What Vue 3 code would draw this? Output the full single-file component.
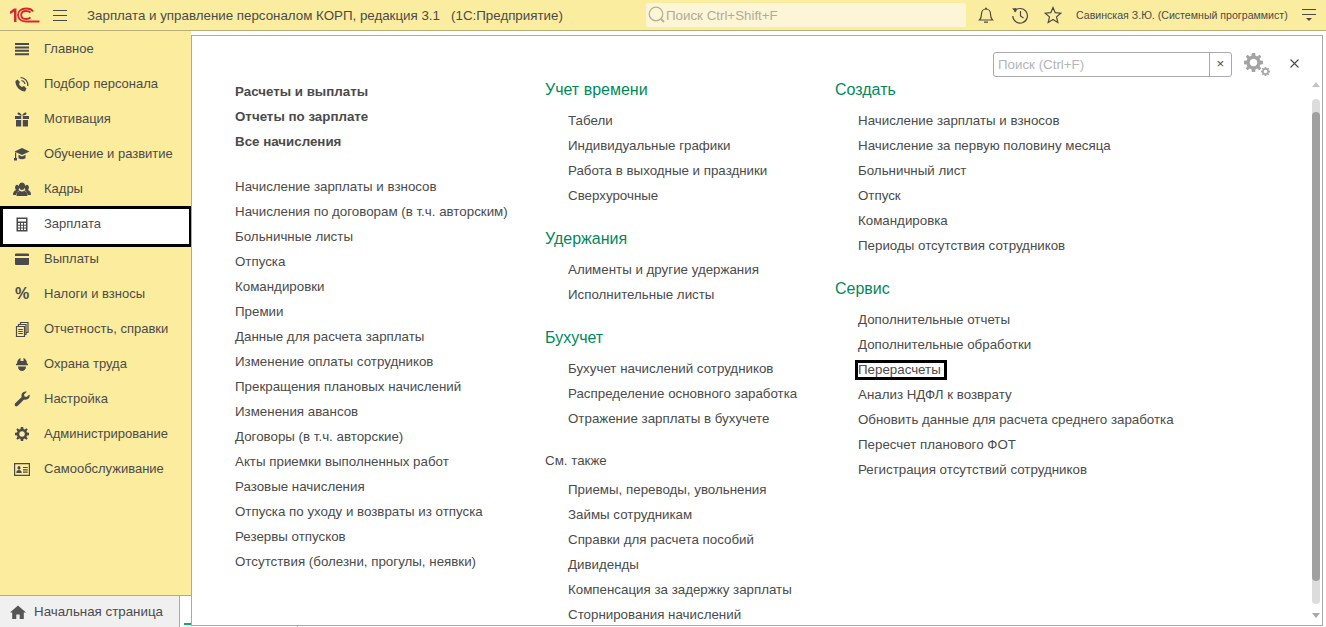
<script setup>
const gearPath = 'M8.800 3H11.200L11.500 5 12.800 5.500 14.400 4.300 15.700 5.600 14.500 7.200 15 8.500 17 8.800V11.200L15 11.500 14.500 12.800 15.700 14.400 14.400 15.700 12.800 14.500 11.500 15 11.200 17H8.800L8.500 15 7.200 14.500 5.600 15.700 4.300 14.400 5.500 12.800 5 11.500 3 11.200V8.800L5 8.500 5.500 7.200 4.300 5.600 5.600 4.300 7.200 5.500 8.500 5zM10 7.200a2.800 2.800 0 1 0 .01 0z';

const navItems = [
  { title: 'Главное', fill: 'M3 4h14v2H3zM3 7.400h14v2H3zM3 10.800h14v2H3zM3 14.200h14v2H3z' },
  {
    title: 'Подбор персонала',
    fill: 'M5.500 5.500 8 8 7 10c.6 1.400 1.600 2.400 3 3l2-1 2.500 2.500-1.500 3C8 17.500 3 12 3.500 7z',
    stroke: 'M8.500 3.500A7.500 7.500 0 0 1 15.800 12M9.500 6.500a4.500 4.500 0 0 1 3.500 3.500'
  },
  {
    title: 'Мотивация',
    fill: 'M3 7h6.200v3H3zM10.800 7H17v3h-6.200zM4 11h5.200v6.500H4zM10.800 11H16v6.500h-5.200zM10 6.500C8 6.500 5.500 6 5.500 4.500S8 2.500 10 6.500c2-4 4.500-3.500 4.500-2S12 6.500 10 6.500z'
  },
  {
    title: 'Обучение и развитие',
    fill: 'M2.500 7.500 10 4l7.500 3.500L10 11zM6.500 10.800l3.500 1.700 3.500-1.700v3.400c-2 1.500-5 1.500-7 0zM3 8.500h1.200V14H5v2.500H2V14h1z'
  },
  {
    title: 'Кадры',
    fill: 'M10 3.500a3.200 3.700 0 1 1-.01 0zM5 5.800a2.600 3 0 0 1 1.800 4.500c-.2.800.2 1.200.8 1.500C5.500 13 4.500 14 4 16H1c0-3 1-4 3-5-1.500-1.500-1-5 1-5.200zM15 5.800a2.600 3 0 0 0-1.800 4.500c.2.800-.2 1.200-.8 1.500 2 1.200 3 2.200 3.500 4.200H19c0-3-1-4-3-5 1.500-1.500 1-5-1-5.200zM7.500 11.500c1.200 1.200 3.800 1.200 5 0 2 .8 3 2.300 3 5.500h-11c0-3.200 1-4.700 3-5.500z'
  },
  {
    title: 'Зарплата',
    fill: 'M4.500 3.500h11v14h-11zM6 5v2.500h8V5zM6 9v1.700h2V9zM9 9v1.700h2V9zM12 9v1.700h2V9zM6 11.700v1.700h2v-1.700zM9 11.700v1.700h2v-1.700zM12 11.700v1.700h2v-1.700zM6 14.400v1.700h2v-1.700zM9 14.400v1.700h2v-1.700zM12 14.400v1.700h2v-1.700z'
  },
  { title: 'Выплаты', fill: 'M4 4.500h12a1 1 0 0 1 1 1V7H3V5.500a1 1 0 0 1 1-1zM3 9h14v6a1 1 0 0 1-1 1H4a1 1 0 0 1-1-1z' },
  { title: 'Налоги и взносы', glyph: '%' },
  {
    title: 'Отчетность, справки',
    stroke: 'M4.500 7.500h8v10h-8zM6.500 7.500v-2h7.500v10h-1.500M8.500 5.500v-2h7.500v10h-2M6.300 10.500h4.500M6.300 12.500h4.500M6.300 14.500h4.500'
  },
  {
    title: 'Охрана труда',
    fill: 'M5 9.800C5 6.500 6.500 4.600 8.500 4v3h3V4c2 .6 3.500 2.500 3.500 5.800h1v1.500H4V9.800zM6 12.500h8c0 2.800-1.800 4.500-4 4.500s-4-1.700-4-4.500z'
  },
  {
    title: 'Настройка',
    fill: 'M17.500 5.500 14.500 8 12.500 7.500 12 5.500l2.800-2.800c-2.500-.8-5 .8-5.300 3-.1.800 0 1.500.2 2.200L3.500 14c-1 1-1 2.200-.3 2.900s2 .7 2.900-.3L12 10.500c3.200 1 6.500-1.500 5.500-5z'
  },
  { title: 'Администрирование', fill: gearPath },
  {
    title: 'Самообслуживание',
    fill: 'M2 4h16v13H2zM3.200 5.300v10.400h13.600V5.300zM7 7a1.500 1.800 0 1 1-.01 0zM4.300 14c0-2.300 1-3 2.700-3s2.700.7 2.700 3zM11 8h4.700v1.100H11zM11 10.300h4.700v1.100H11zM11 12.600h4.700v1.100H11z'
  }
];

const mainLinks = ['Расчеты и выплаты', 'Отчеты по зарплате', 'Все начисления'];

const chargeLinks = [
  'Начисление зарплаты и взносов',
  'Начисления по договорам (в т.ч. авторским)',
  'Больничные листы',
  'Отпуска',
  'Командировки',
  'Премии',
  'Данные для расчета зарплаты',
  'Изменение оплаты сотрудников',
  'Прекращения плановых начислений',
  'Изменения авансов',
  'Договоры (в т.ч. авторские)',
  'Акты приемки выполненных работ',
  'Разовые начисления',
  'Отпуска по уходу и возвраты из отпуска',
  'Резервы отпусков',
  'Отсутствия (болезни, прогулы, неявки)'
];

const middleGroups = [
  { title: 'Учет времени', links: ['Табели', 'Индивидуальные графики', 'Работа в выходные и праздники', 'Сверхурочные'] },
  { title: 'Удержания', links: ['Алименты и другие удержания', 'Исполнительные листы'] },
  { title: 'Бухучет', links: ['Бухучет начислений сотрудников', 'Распределение основного заработка', 'Отражение зарплаты в бухучете'] },
  {
    title: 'См. также',
    plain: true,
    links: ['Приемы, переводы, увольнения', 'Займы сотрудникам', 'Справки для расчета пособий', 'Дивиденды', 'Компенсация за задержку зарплаты', 'Сторнирования начислений']
  }
];

const rightGroups = [
  {
    title: 'Создать',
    links: ['Начисление зарплаты и взносов', 'Начисление за первую половину месяца', 'Больничный лист', 'Отпуск', 'Командировка', 'Периоды отсутствия сотрудников']
  },
  {
    title: 'Сервис',
    links: ['Дополнительные отчеты', 'Дополнительные обработки', 'Перерасчеты', 'Анализ НДФЛ к возврату', 'Обновить данные для расчета среднего заработка', 'Пересчет планового ФОТ', 'Регистрация отсутствий сотрудников']
  }
];
</script>

<template>
  <div class="app">
    <header class="topbar">
      <svg class="logo" width="30" height="16" viewBox="0 0 30 16">
        <path d="M0 4.500 4 1.500h2.500V15H4V4.800L0 7z" fill="#d9262c" />
        <path d="M23 4.500C22 2.500 19 1.500 16 1.500 11 1.500 8 4.500 8 8s3 6.500 8 6.500h13.500" fill="none" stroke="#d9262c" stroke-width="1.800" />
        <path d="M20.500 5.500C19.500 4.500 18 4 16 4c-3 0-4.800 1.800-4.800 4s1.800 4 4.800 4c2 0 3.500-.5 4.500-1.500" fill="none" stroke="#d9262c" stroke-width="1.800" />
      </svg>
      <svg class="burger" width="14" height="11" viewBox="0 0 14 11">
        <path d="M0 .5h14M0 5.500h14M0 10.500h14" stroke="#4a4a4a" stroke-width="1" />
      </svg>
      <div class="app-title">Зарплата и управление персоналом КОРП, редакция 3.1&nbsp;&nbsp;&nbsp;(1С:Предприятие)</div>
      <div class="global-search">
        <svg width="18" height="20" viewBox="0 0 18 20">
          <circle cx="8" cy="9" r="6.800" fill="none" stroke="#b4b09a" stroke-width="1.300" />
          <path d="M13 14l3 3" stroke="#b4b09a" stroke-width="2" />
        </svg>
        <span>Поиск Ctrl+Shift+F</span>
      </div>
      <div class="top-actions">
        <svg width="18" height="18" viewBox="0 0 18 18">
          <path d="M2.500 14c1.500-1.500 2-3 2-6s2-5 4.500-5 4.500 2 4.500 5 .5 4.500 2 6zM7 16.200h4" fill="none" stroke="#4a4a4a" stroke-width="1.200" />
          <path d="M8 2.500h2" stroke="#4a4a4a" stroke-width="1.500" />
        </svg>
        <svg width="18" height="18" viewBox="0 0 18 18">
          <path d="M3.200 5.500A7.300 7.300 0 1 1 1.800 10M9.500 5v5l3 2" fill="none" stroke="#4a4a4a" stroke-width="1.200" />
          <path d="M1 2.500 5.500 2 5 6.500z" fill="#4a4a4a" />
        </svg>
        <svg width="18" height="18" viewBox="0 0 18 18">
          <path d="M9 1.500l2.200 5.200 5.600.5-4.300 3.700 1.300 5.500L9 13.500l-4.800 2.900 1.300-5.500L1.200 7.200l5.600-.5z" fill="none" stroke="#4a4a4a" stroke-width="1.200" />
        </svg>
      </div>
      <div class="user-name">Савинская З.Ю. (Системный программист)</div>
      <svg class="top-menu" width="14" height="14" viewBox="0 0 14 14">
        <path d="M0 1.500h14M0 6.500h14" stroke="#4a4a4a" stroke-width="1" />
        <path d="M4 10h6l-3 3z" fill="#4a4a4a" />
      </svg>
    </header>

    <div class="workspace">
      <div class="left-col">
        <nav class="sidebar">
          <a v-for="item in navItems" :key="item.title" class="nav-item" :class="{ active: item.title === 'Зарплата' }">
            <span v-if="item.glyph" class="nav-glyph">{{ item.glyph }}</span>
            <svg v-else class="nav-icon" width="20" height="20" viewBox="0 0 20 20">
              <path v-if="item.fill" :d="item.fill" fill="#4a4a4a" fill-rule="evenodd" />
              <path v-if="item.stroke" :d="item.stroke" fill="none" stroke="#4a4a4a" stroke-width="1.200" />
            </svg>
            <span class="nav-label">{{ item.title }}</span>
          </a>
        </nav>
        <div class="tabs">
          <div class="home-tab">
            <svg width="16" height="14" viewBox="0 0 16 14">
              <path d="M8 .5 16 7.500h-2.200V14H9.700V9.500H6.300V14H2.200V7.500H0z" fill="#555" />
            </svg>
            <span>Начальная страница</span>
          </div>
          <span class="tab-accent"></span>
        </div>
      </div>

      <main class="panel">
        <div class="panel-tools">
          <div class="panel-search">
            <span class="panel-search-text">Поиск (Ctrl+F)</span>
            <span class="panel-search-clear">×</span>
          </div>
          <svg class="gears" width="28" height="24" viewBox="0 0 28 24">
            <path :d="gearPath" fill="#a3a3a3" fill-rule="evenodd" transform="translate(-4.070 -4.070) scale(1.357)" />
            <path :d="gearPath" fill="#a3a3a3" fill-rule="evenodd" transform="translate(15.070 12.070) scale(.643)" />
          </svg>
          <svg class="panel-close" width="9" height="9" viewBox="0 0 9 9">
            <path d="M.5.500l8 8M8.500.500l-8 8" stroke="#4a4a4a" stroke-width="1.100" />
          </svg>
        </div>

        <div class="columns">
          <section class="col-first">
            <a v-for="link in mainLinks" :key="link" class="link link-strong">{{ link }}</a>
            <div class="charge-list">
              <a v-for="link in chargeLinks" :key="link" class="link">{{ link }}</a>
            </div>
          </section>

          <section>
            <div v-for="group in middleGroups" :key="group.title" class="group" :class="{ 'group-plain': group.plain }">
              <h3 class="group-title">{{ group.title }}</h3>
              <a v-for="link in group.links" :key="link" class="link link-nested">{{ link }}</a>
            </div>
          </section>

          <section>
            <div v-for="group in rightGroups" :key="group.title" class="group">
              <h3 class="group-title">{{ group.title }}</h3>
              <a v-for="link in group.links" :key="link" class="link link-nested">
                <span :class="{ marked: link === 'Перерасчеты' }">{{ link }}</span>
              </a>
            </div>
          </section>
        </div>

        <div class="scrollbar">
          <span class="arrow-up"></span>
          <div class="scroll-track"><div class="scroll-thumb"></div></div>
          <span class="arrow-down"></span>
        </div>
      </main>
    </div>
  </div>
</template>

<style>
html,
body {
  margin: 0;
  height: 100%;
  overflow: hidden;
}
</style>

<style scoped>
.app {
  width: 1326px;
  height: 627px;
  display: flex;
  flex-direction: column;
  font-family: "Liberation Sans", Arial, sans-serif;
  font-size: 13.330px;
  color: #4b4b4b;
  background: #fff;
  overflow: hidden;
}

.topbar {
  height: 30px;
  flex-shrink: 0;
  display: flex;
  align-items: center;
  background: #fbed9f;
  border-bottom: 1px solid #b9ae78;
  padding-left: 10px;
}

.logo {
  flex-shrink: 0;
}

.burger {
  margin-left: 13px;
  flex-shrink: 0;
}

.app-title {
  margin-left: 20px;
  width: 559px;
  white-space: nowrap;
}

.global-search {
  width: 320px;
  height: 24px;
  background: #fdf6d6;
  border-radius: 2px;
  display: flex;
  align-items: center;
  padding-left: 2px;
  box-sizing: border-box;
  color: #b0ab95;
}

.top-actions {
  display: flex;
  align-items: center;
  gap: 15.500px;
  margin-left: 11px;
}

.user-name {
  margin-left: 14px;
  font-size: 10.600px;
  white-space: nowrap;
  width: 226px;
}

.top-menu {
  flex-shrink: 0;
}

.workspace {
  position: relative;
  flex: 1;
  min-height: 0;
  display: flex;
}

.workspace::after {
  content: '';
  position: absolute;
  left: 297px;
  bottom: 0;
  width: 1px;
  height: 2px;
  background: #a9a9a9;
}

.left-col {
  width: 191px;
  flex-shrink: 0;
  display: flex;
  flex-direction: column;
}

.sidebar {
  flex: 1;
  background: #fbec9e;
  border-bottom: 1px solid #a9a9a9;
}

.nav-item {
  position: relative;
  height: 35px;
  display: flex;
  align-items: center;
  padding-left: 12px;
  box-sizing: border-box;
  font-size: 13px;
}

.nav-item.active::before {
  content: '';
  position: absolute;
  left: 0;
  right: -1px;
  top: 0;
  height: 41px;
  box-sizing: border-box;
  background: #fff;
  border: 3px solid #000;
}

.nav-icon,
.nav-glyph,
.nav-label {
  position: relative;
}

.nav-icon {
  flex-shrink: 0;
}

.nav-glyph {
  width: 20px;
  flex-shrink: 0;
  text-align: center;
  font-size: 16px;
  font-weight: bold;
}

.nav-label {
  margin-left: 12px;
  white-space: nowrap;
}

.tabs {
  height: 31px;
  flex-shrink: 0;
  display: flex;
}

.home-tab {
  width: 180px;
  display: flex;
  align-items: center;
  gap: 8px;
  padding-left: 10px;
  box-sizing: border-box;
  background: #f0f0f0;
  border-right: 1px solid #a9a9a9;
}

.tab-accent {
  width: 7px;
  height: 2px;
  margin: auto 0 2px 4px;
  background: #1aa865;
}

.panel {
  position: relative;
  flex: 1;
  margin: 4px 3px 1px 0;
  border: 1px solid #a9a9a9;
  box-sizing: border-box;
  display: flex;
  flex-direction: column;
  overflow: hidden;
  min-width: 0;
}

.panel-tools {
  height: 25px;
  flex-shrink: 0;
  margin-top: 16px;
  display: flex;
  align-items: center;
}

.panel-search {
  margin-left: 801px;
  width: 239px;
  height: 25px;
  box-sizing: border-box;
  border: 1px solid #a9a9a9;
  border-radius: 3px;
  display: flex;
  align-items: center;
  justify-content: space-between;
  color: #b5b5b5;
}

.panel-search-text {
  padding-left: 4px;
}

.panel-search-clear {
  width: 21px;
  height: 23px;
  line-height: 22px;
  border-left: 1px solid #a9a9a9;
  text-align: center;
  color: #4b4b4b;
}

.gears {
  margin-left: 12px;
  flex-shrink: 0;
}

.panel-close {
  margin: 0 0 2px 18px;
  flex-shrink: 0;
}

.columns {
  flex: 1;
  min-height: 0;
  margin-top: 2px;
  padding-left: 43px;
  display: grid;
  grid-template-columns: 310px 290px 1fr;
  overflow: hidden;
}

.link {
  display: block;
  height: 25px;
  line-height: 25px;
  white-space: nowrap;
}

.link-strong {
  font-weight: bold;
}

.charge-list {
  margin-top: 20px;
}

.link-nested {
  padding-left: 23px;
}

.group + .group {
  margin-top: 20px;
}

.group + .group-plain {
  margin-top: 19px;
}

.group-title {
  margin: 0 0 7px;
  height: 22px;
  line-height: 22px;
  font-size: 16px;
  font-weight: normal;
  color: #008a5c;
}

.group-plain .group-title {
  margin-bottom: 5px;
  font-size: 13.330px;
  color: #4b4b4b;
}

.marked {
  position: relative;
  display: inline-block;
  line-height: 14px;
}

.marked::after {
  content: '';
  position: absolute;
  left: -3px;
  right: -6px;
  top: -3px;
  bottom: -3px;
  border: 3px solid #000;
}

.scrollbar {
  position: absolute;
  top: 46px;
  bottom: 7px;
  right: 2px;
  width: 8px;
  display: flex;
  flex-direction: column;
  align-items: center;
}

.arrow-up,
.arrow-down {
  width: 0;
  height: 0;
  border-left: 4px solid transparent;
  border-right: 4px solid transparent;
  flex-shrink: 0;
}

.arrow-up {
  border-bottom: 5px solid #c4c4c4;
}

.arrow-down {
  border-top: 5px solid #a9a9a9;
}

.scroll-track {
  flex: 1;
  width: 8px;
  margin: 12px 0 9px;
  background: #dcdcdc;
  border-radius: 4px;
  padding: 13px 0 23px;
  box-sizing: border-box;
  display: flex;
}

.scroll-thumb {
  flex: 1;
  background: #a0a0a0;
  border-radius: 4px;
}
</style>
